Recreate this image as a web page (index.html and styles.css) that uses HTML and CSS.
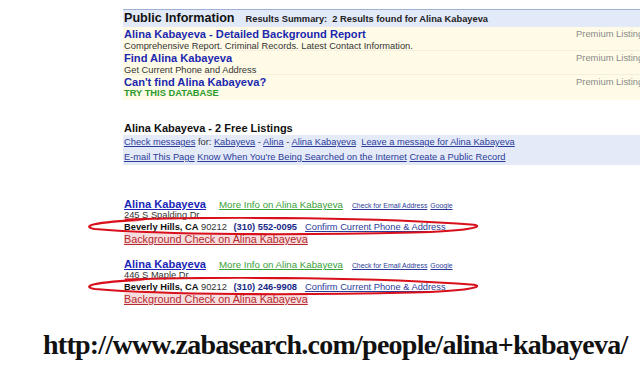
FILE: index.html
```html
<!DOCTYPE html>
<html>
<head>
<meta charset="utf-8">
<link rel="stylesheet" href="styles.css">
</head>
<body>
<div class="page">
  <section class="public">
    <div class="pub-head">
      <span class="pub-title">Public Information</span>
      <span class="pub-summary">Results Summary:&nbsp; 2 Results found for Alina Kabayeva</span>
    </div>
    <div class="pub-body">
      <div class="pub-row">
        <div class="pub-main">
          <a class="pub-link">Alina Kabayeva - Detailed Background Report</a>
          <div class="pub-desc">Comprehensive Report. Criminal Records. Latest Contact Information.</div>
        </div>
        <div class="premium">Premium Listings</div>
      </div>
      <div class="pub-row">
        <div class="pub-main">
          <a class="pub-link">Find Alina Kabayeva</a>
          <div class="pub-desc">Get Current Phone and Address</div>
        </div>
        <div class="premium">Premium Listings</div>
      </div>
      <div class="pub-row last">
        <div class="pub-main">
          <a class="pub-link">Can't find Alina Kabayeva?</a>
          <div class="pub-try">TRY THIS DATABASE</div>
        </div>
        <div class="premium">Premium Listings</div>
      </div>
    </div>
  </section>

  <section class="free">
    <h2 class="free-title">Alina Kabayeva - 2 Free Listings</h2>
    <div class="free-links">
      <div><a>Check messages</a> for: <a>Kabayeva</a> - <a>Alina</a> - <a>Alina Kabayeva</a>&nbsp; <a>Leave a message for Alina Kabayeva</a></div>
      <div><a>E-mail This Page</a> <a>Know When You're Being Searched on the Internet</a> <a>Create a Public Record</a></div>
    </div>
  </section>

  <section class="results">
    <div class="result">
      <div class="r-top"><a class="r-name">Alina Kabayeva</a><a class="r-more">More Info on Alina Kabayeva</a><a class="r-small">Check for Email Address</a><a class="r-small">Google</a></div>
      <div class="r-addr">245 S Spalding Dr</div>
      <div class="r-city"><b>Beverly Hills, CA</b> 90212 <b class="r-phone">(310) 552-0095</b><a class="r-confirm">Confirm Current Phone &amp; Address</a></div>
      <div class="r-bg"><a>Background Check on Alina Kabayeva</a></div>
      <svg class="ring" viewBox="0 0 400 22" preserveAspectRatio="none"><path d="M40 3 C 150 -1, 300 1, 392 9 C 402 11, 388 16, 330 18 C 220 21, 80 21, 10 14 C -4 11, 6 6, 60 3" fill="none" stroke="#d8101c" stroke-width="2.4"/></svg>
    </div>
    <div class="result">
      <div class="r-top"><a class="r-name">Alina Kabayeva</a><a class="r-more">More Info on Alina Kabayeva</a><a class="r-small">Check for Email Address</a><a class="r-small">Google</a></div>
      <div class="r-addr">446 S Maple Dr</div>
      <div class="r-city"><b>Beverly Hills, CA</b> 90212 <b class="r-phone">(310) 246-9908</b><a class="r-confirm">Confirm Current Phone &amp; Address</a></div>
      <div class="r-bg"><a>Background Check on Alina Kabayeva</a></div>
      <svg class="ring" viewBox="0 0 400 22" preserveAspectRatio="none"><path d="M40 3 C 150 -1, 300 1, 392 9 C 402 11, 388 16, 330 18 C 220 21, 80 21, 10 14 C -4 11, 6 6, 60 3" fill="none" stroke="#d8101c" stroke-width="2.4"/></svg>
    </div>
  </section>

  <div class="url">http://www.zabasearch.com/people/alina+kabayeva/</div>
</div>
</body>
</html>
```

FILE: styles.css
```css
html, body {
  margin: 0;
  padding: 0;
  background: #ffffff;
  overflow: hidden;
}
.page {
  width: 640px;
  height: 384px;
  font-family: "Liberation Sans", Arial, sans-serif;
  color: #222;
  position: relative;
  overflow: hidden;
}
a {
  color: #2233aa;
  text-decoration: underline;
  cursor: pointer;
}
.public {
  margin: 9px 0 0 123px;
  width: 540px;
}
.pub-head {
  background: #e2e9f8;
  border-top: 1px solid #9fb0d6;
  height: 17px;
  display: flex;
  align-items: baseline;
  padding-left: 1px;
  gap: 11px;
}
.pub-title {
  font-size: 12.6px;
  font-weight: bold;
  color: #111;
  line-height: 17px;
}
.pub-summary {
  font-size: 9.3px;
  font-weight: bold;
  color: #222;
}
.pub-body {
  background: #fffbe6;
  padding-bottom: 1px;
}
.pub-row {
  display: flex;
  justify-content: space-between;
  border-bottom: 1px solid #f4eedc;
  padding: 1px 0 0 1px;
  height: 22px;
}
.pub-row.last {
  border-bottom: none;
  height: 23px;
}
.pub-main {
  display: flex;
  flex-direction: column;
}
.pub-link {
  font-size: 11.1px;
  font-weight: bold;
  color: #1c28b0;
  text-decoration: none;
  line-height: 12px;
}
.pub-desc {
  font-size: 9.3px;
  color: #333;
  line-height: 12px;
}
.pub-try {
  font-size: 9.3px;
  font-weight: bold;
  color: #2b9a2b;
  line-height: 11px;
}
.premium {
  width: 87px;
  font-size: 9.4px;
  color: #8a8a8a;
  line-height: 12px;
  white-space: nowrap;
}
.free {
  margin: 21px 0 0 123px;
}
.free-title {
  font-size: 11px;
  font-weight: bold;
  color: #111;
  margin: 0 0 0 1px;
  line-height: 14px;
}
.free-links {
  background: #e4eaf8;
  width: 540px;
  font-size: 9.3px;
  color: #333;
  padding: 0 0 0 1px;
  line-height: 15px;
}
.free-links a {
  color: #2b3b9a;
}
.results {
  margin: 33px 0 0 124px;
}
.result {
  position: relative;
  margin-bottom: 12px;
}
.r-top {
  display: flex;
  align-items: baseline;
  height: 12px;
  line-height: 12px;
}
.r-name {
  font-size: 11.1px;
  font-weight: bold;
  color: #1a26b8;
  margin-right: 13px;
}
.r-more {
  font-size: 9.7px;
  color: #3aa03a;
  margin-right: 9px;
}
.r-small {
  font-size: 6.9px;
  color: #2b3b9a;
  margin-right: 3px;
}
.r-addr {
  font-size: 9.3px;
  color: #333;
  height: 11px;
  line-height: 11px;
}
.r-city {
  font-size: 9.3px;
  color: #333;
  height: 12px;
  line-height: 12px;
}
.r-city b {
  color: #111;
}
.r-city .r-phone {
  color: #1a2a88;
  margin-left: 4px;
  margin-right: 8px;
}
.r-confirm {
  color: #2b3b9a;
}
.r-bg {
  font-size: 10.8px;
  height: 13px;
  line-height: 13px;
}
.r-bg a {
  color: #b4282e;
  background: #f7dede;
}
.ring {
  position: absolute;
  left: -39px;
  top: 19px;
  width: 397px;
  height: 19px;
}
.url {
  margin: 24px 0 0 43px;
  font-family: "Liberation Serif", "Times New Roman", serif;
  font-weight: bold;
  font-size: 28px;
  letter-spacing: -0.75px;
  line-height: 30px;
  color: #111;
  white-space: nowrap;
}
```
